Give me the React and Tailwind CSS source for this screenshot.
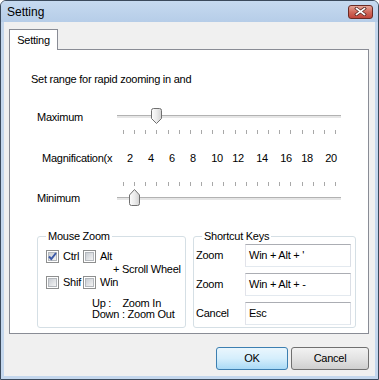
import React from "react";

function Thumb({ down, id }) {
  const d = down
    ? "M0.5 2.5 Q0.5 0.5 2.5 0.5 H8.5 Q10.5 0.5 10.5 2.5 V10.5 L5.5 15.5 L0.5 10.5 Z"
    : "M0.5 14.5 Q0.5 16.5 2.5 16.5 H8.5 Q10.5 16.5 10.5 14.5 V6 L5.5 0.5 L0.5 6 Z";
  return (
    <svg width="11" height="17" viewBox="0 0 11 17" className="block">
      <defs>
        <linearGradient id={id} x1="0" y1="0" x2="1" y2="0">
          <stop offset="0" stopColor="#fdfdfd" />
          <stop offset="0.5" stopColor="#ececec" />
          <stop offset="1" stopColor="#d2d2d2" />
        </linearGradient>
      </defs>
      <path d={d} fill={`url(#${id})`} stroke="#707070" strokeWidth="1" />
    </svg>
  );
}

function Ticks() {
  return (
    <div className="flex justify-between w-[213px] h-[4px]">
      {Array.from({ length: 20 }).map((_, i) => (
        <div key={i} className="w-px h-full bg-[#a8a8a8]" />
      ))}
    </div>
  );
}

function Checkbox({ checked }) {
  return (
    <div className="w-[13px] h-[13px] border border-[#8e8f8f] bg-white p-[1px] relative shrink-0">
      <div className="w-full h-full border border-[#b4b8bd] bg-gradient-to-br from-[#c9cdd3] to-[#f4f4f4]" />
      {checked && (
        <svg width="11" height="11" viewBox="0 0 11 11" className="absolute left-0 top-0">
          <path d="M2 5.5 L4.3 8 L9 2" fill="none" stroke="#3c5aa8" strokeWidth="2" />
        </svg>
      )}
    </div>
  );
}

function Group({ title, className, children }) {
  return (
    <div className={"relative border border-[#d5dfe5] rounded-[3px] " + className}>
      <div className="absolute -top-[7px] left-[8px] bg-white px-[2px] leading-[13px]">{title}</div>
      {children}
    </div>
  );
}

const nums = [
  { n: "2", c: "ml-0" },
  { n: "4", c: "ml-[1px]" },
  { n: "6", c: "ml-[1px]" },
  { n: "8", c: "ml-[1px]" },
  { n: "10", c: "ml-[4px]" },
  { n: "12", c: "ml-[1px]" },
  { n: "14", c: "ml-[4px]" },
  { n: "16", c: "ml-[4px]" },
  { n: "18", c: "ml-[1px]" },
  { n: "20", c: "ml-[4px]" },
];

export default function App() {
  return (
    <div className="w-[379px] h-[380px] bg-[#c4d7ed] border border-[#3b4a5c] rounded-t-[6px] flex flex-col font-['Liberation_Sans',Arial,sans-serif] text-[11px] tracking-[-0.25px] text-black overflow-hidden">
      {/* title bar */}
      <div className="h-[21px] shrink-0 flex items-center justify-between pl-[6px] pr-[5px] bg-gradient-to-b from-[#c6daf0] to-[#b6cde8]">
        <span className="text-[12px] tracking-normal leading-[14px]">Setting</span>
        <div className="w-[25px] h-[14px] rounded-[3px] border border-[#6a2a24] bg-gradient-to-b from-[#e5a598] via-[#d0695b] to-[#c0443a] flex items-center justify-center">
          <svg width="13" height="9" viewBox="0 0 13 9">
            <path d="M2.5 1.5 L10.5 7.5 M10.5 1.5 L2.5 7.5" stroke="#5b2a26" strokeWidth="3.2" strokeLinecap="square" />
            <path d="M2.5 1.5 L10.5 7.5 M10.5 1.5 L2.5 7.5" stroke="#ffffff" strokeWidth="1.6" strokeLinecap="square" />
          </svg>
        </div>
      </div>

      {/* client area */}
      <div className="flex-1 mx-[3px] mb-[3px] bg-[#f0f0f0] flex flex-col">
        {/* tab header */}
        <div className="mt-[7px] ml-[5px] flex">
          <div className="relative z-10 -mb-px h-[21px] w-[49px] bg-white border border-b-0 border-[#898c95] flex items-center justify-center leading-[13px]">
            Setting
          </div>
        </div>
        {/* tab page */}
        <div className="ml-[5px] w-[360px] h-[285px] bg-white border border-[#898c95] flex flex-col">
          <div className="mt-[23px] ml-[21px] leading-[13px] h-[13px]">Set range for rapid zooming in and</div>

          {/* Maximum */}
          <div className="mt-[22px] ml-[27px] flex items-start h-[17px]">
            <div className="w-[80px] mt-[3px] leading-[13px]">Maximum</div>
            <div className="relative w-[224px] h-[17px]">
              <div className="absolute left-0 right-0 top-[7px] h-[3px] border-t border-[#b2b2b2] bg-[#e6e6e6]" />
              <div className="absolute top-0 left-[34px]">
                <Thumb down id="t1" />
              </div>
            </div>
          </div>
          <div className="mt-[5px] ml-[113px]">
            <Ticks />
          </div>

          {/* numbers */}
          <div className="mt-[18px] ml-[32px] flex leading-[13px] h-[13px]">
            <div className="w-[78px]">Magnification(x</div>
            {nums.map((x) => (
              <div key={x.n} className={"w-[20px] text-center " + x.c}>
                {x.n}
              </div>
            ))}
          </div>

          <div className="mt-[17px] ml-[113px]">
            <Ticks />
          </div>

          {/* Minimum */}
          <div className="mt-[3px] ml-[27px] flex items-start h-[17px]">
            <div className="w-[80px] mt-[3px] leading-[13px]">Minimum</div>
            <div className="relative w-[224px] h-[17px]">
              <div className="absolute left-0 right-0 top-[8px] h-[3px] border-t border-[#b2b2b2] bg-[#e6e6e6]" />
              <div className="absolute top-0 left-[12px]">
                <Thumb id="t2" />
              </div>
            </div>
          </div>

          {/* group boxes */}
          <div className="mt-[30px] ml-[27px] flex gap-[7px]">
            <Group title="Mouse Zoom" className="w-[149px] h-[92px] flex flex-col">
              <div className="mt-[13px] ml-[8px] flex items-center h-[13px] leading-[13px]">
                <Checkbox checked />
                <div className="ml-[4px] w-[20px]">Ctrl</div>
                <Checkbox />
                <div className="ml-[4px]">Alt</div>
              </div>
              <div className="ml-[75px] h-[13px] leading-[13px] whitespace-nowrap">+ Scroll Wheel</div>
              <div className="ml-[8px] flex items-center h-[13px] leading-[13px]">
                <Checkbox />
                <div className="ml-[4px] w-[20px] overflow-hidden whitespace-nowrap">Shif</div>
                <Checkbox />
                <div className="ml-[4px]">Win</div>
              </div>
              <div className="mt-[9px] ml-[54px] leading-[11px] whitespace-pre">{"Up :    Zoom In"}</div>
              <div className="ml-[54px] leading-[11px] whitespace-pre">{"Down : Zoom Out"}</div>
            </Group>

            <Group title="Shortcut Keys" className="w-[163px] h-[92px] flex flex-col gap-[6px] pt-[7px]">
              {[
                ["Zoom", "Win + Alt + '"],
                ["Zoom", "Win + Alt + -"],
                ["Cancel", "Esc"],
              ].map(([l, v], i) => (
                <div key={i} className="flex items-center h-[23px]">
                  <div className="w-[51px] pl-[2px] leading-[13px]">{l}</div>
                  <div className="w-[106px] h-[23px] border border-[#abadb3] border-l-[#e2e3ea] border-r-[#dbdfe6] border-b-[#e3e9ef] bg-white flex items-center pl-[3px] leading-[13px] whitespace-pre">
                    {v}
                  </div>
                </div>
              ))}
            </Group>
          </div>
        </div>

        {/* buttons */}
        <div className="mt-[13px] mr-[6px] flex justify-end gap-[3px]">
          <div className="w-[72px] h-[23px] rounded-[3px] border border-[#3c7fb1] bg-gradient-to-b from-[#eaf6fd] via-[#d5eefc] to-[#a9daf6] flex items-center justify-center leading-[13px]">
            OK
          </div>
          <div className="w-[78px] h-[23px] rounded-[3px] border border-[#707070] bg-gradient-to-b from-[#f2f2f2] via-[#e3e3e3] to-[#cfcfcf] flex items-center justify-center leading-[13px]">
            Cancel
          </div>
        </div>
      </div>
    </div>
  );
}
